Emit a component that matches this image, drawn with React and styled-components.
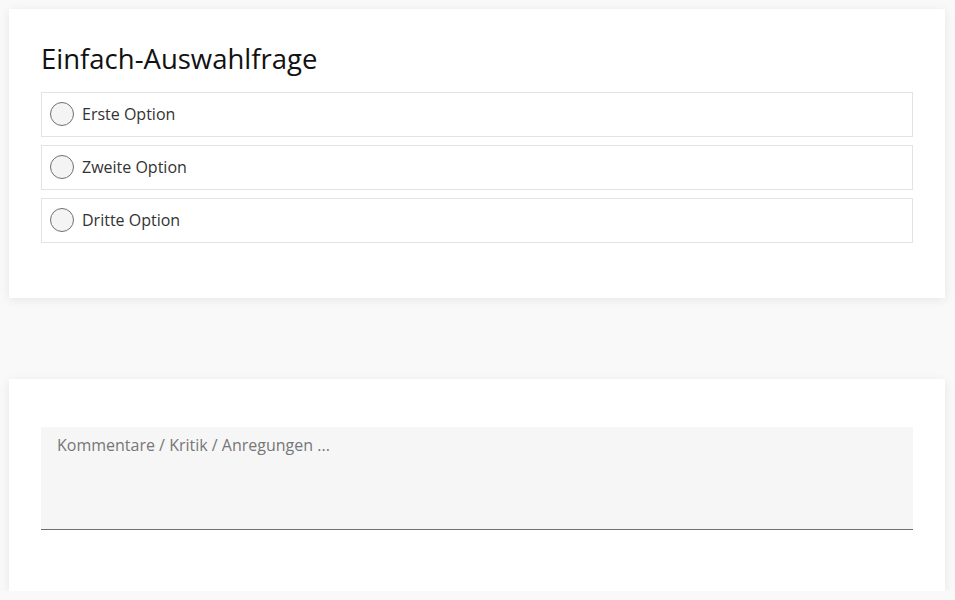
import React from "react";
import styled, { createGlobalStyle } from "styled-components";

const GlobalStyle = createGlobalStyle`
  html, body {
    margin: 0;
    padding: 0;
    background: #f9f9f9;
    font-family: "Open Sans", "Noto Sans", sans-serif;
  }
`;

const Page = styled.div`
  padding: 9px 10px 0 9px;
  display: flex;
  flex-direction: column;
  gap: 81px;
`;

const Card = styled.div`
  background: #fff;
  box-shadow: 0 2px 10px rgba(0, 0, 0, 0.08);
  padding: ${(p) => p.pad};
`;

const Title = styled.h2`
  margin: 0 0 15px 0;
  font-size: 27.5px;
  font-weight: 400;
  line-height: 36px;
  color: #111;
`;

const Options = styled.div`
  display: flex;
  flex-direction: column;
  gap: 8px;
`;

const Option = styled.label`
  display: flex;
  align-items: center;
  gap: 8px;
  box-sizing: border-box;
  height: 45px;
  padding: 0 8px 1px 8px;
  border: 1px solid #e3e3e3;
  cursor: pointer;
`;

const Radio = styled.span`
  width: 22px;
  height: 22px;
  border-radius: 50%;
  border: 1px solid #707070;
  background: #f4f4f4;
  flex-shrink: 0;
`;

const OptionText = styled.span`
  font-size: 16px;
  color: #333;
`;

const Comment = styled.textarea`
  display: block;
  width: 100%;
  box-sizing: border-box;
  height: 103px;
  resize: none;
  border: none;
  border-bottom: 1px solid #707070;
  background: #f6f6f6;
  padding: 6px 16px;
  font-family: "Open Sans", "Noto Sans", sans-serif;
  font-size: 16px;
  line-height: 24px;
  color: #333;
  outline: none;
  &::placeholder {
    color: #777;
  }
`;

const options = ["Erste Option", "Zweite Option", "Dritte Option"];

const App = () => {
  return (
    <Page>
      <GlobalStyle />
      <Card pad="32px 32px 55px 32px">
        <Title>Einfach-Auswahlfrage</Title>
        <Options>
          {options.map((o) => (
            <Option key={o}>
              <Radio />
              <OptionText>{o}</OptionText>
            </Option>
          ))}
        </Options>
      </Card>
      <Card pad="48px 32px 61px 32px">
        <Comment placeholder="Kommentare / Kritik / Anregungen ..." />
      </Card>
    </Page>
  );
};

export default App;
